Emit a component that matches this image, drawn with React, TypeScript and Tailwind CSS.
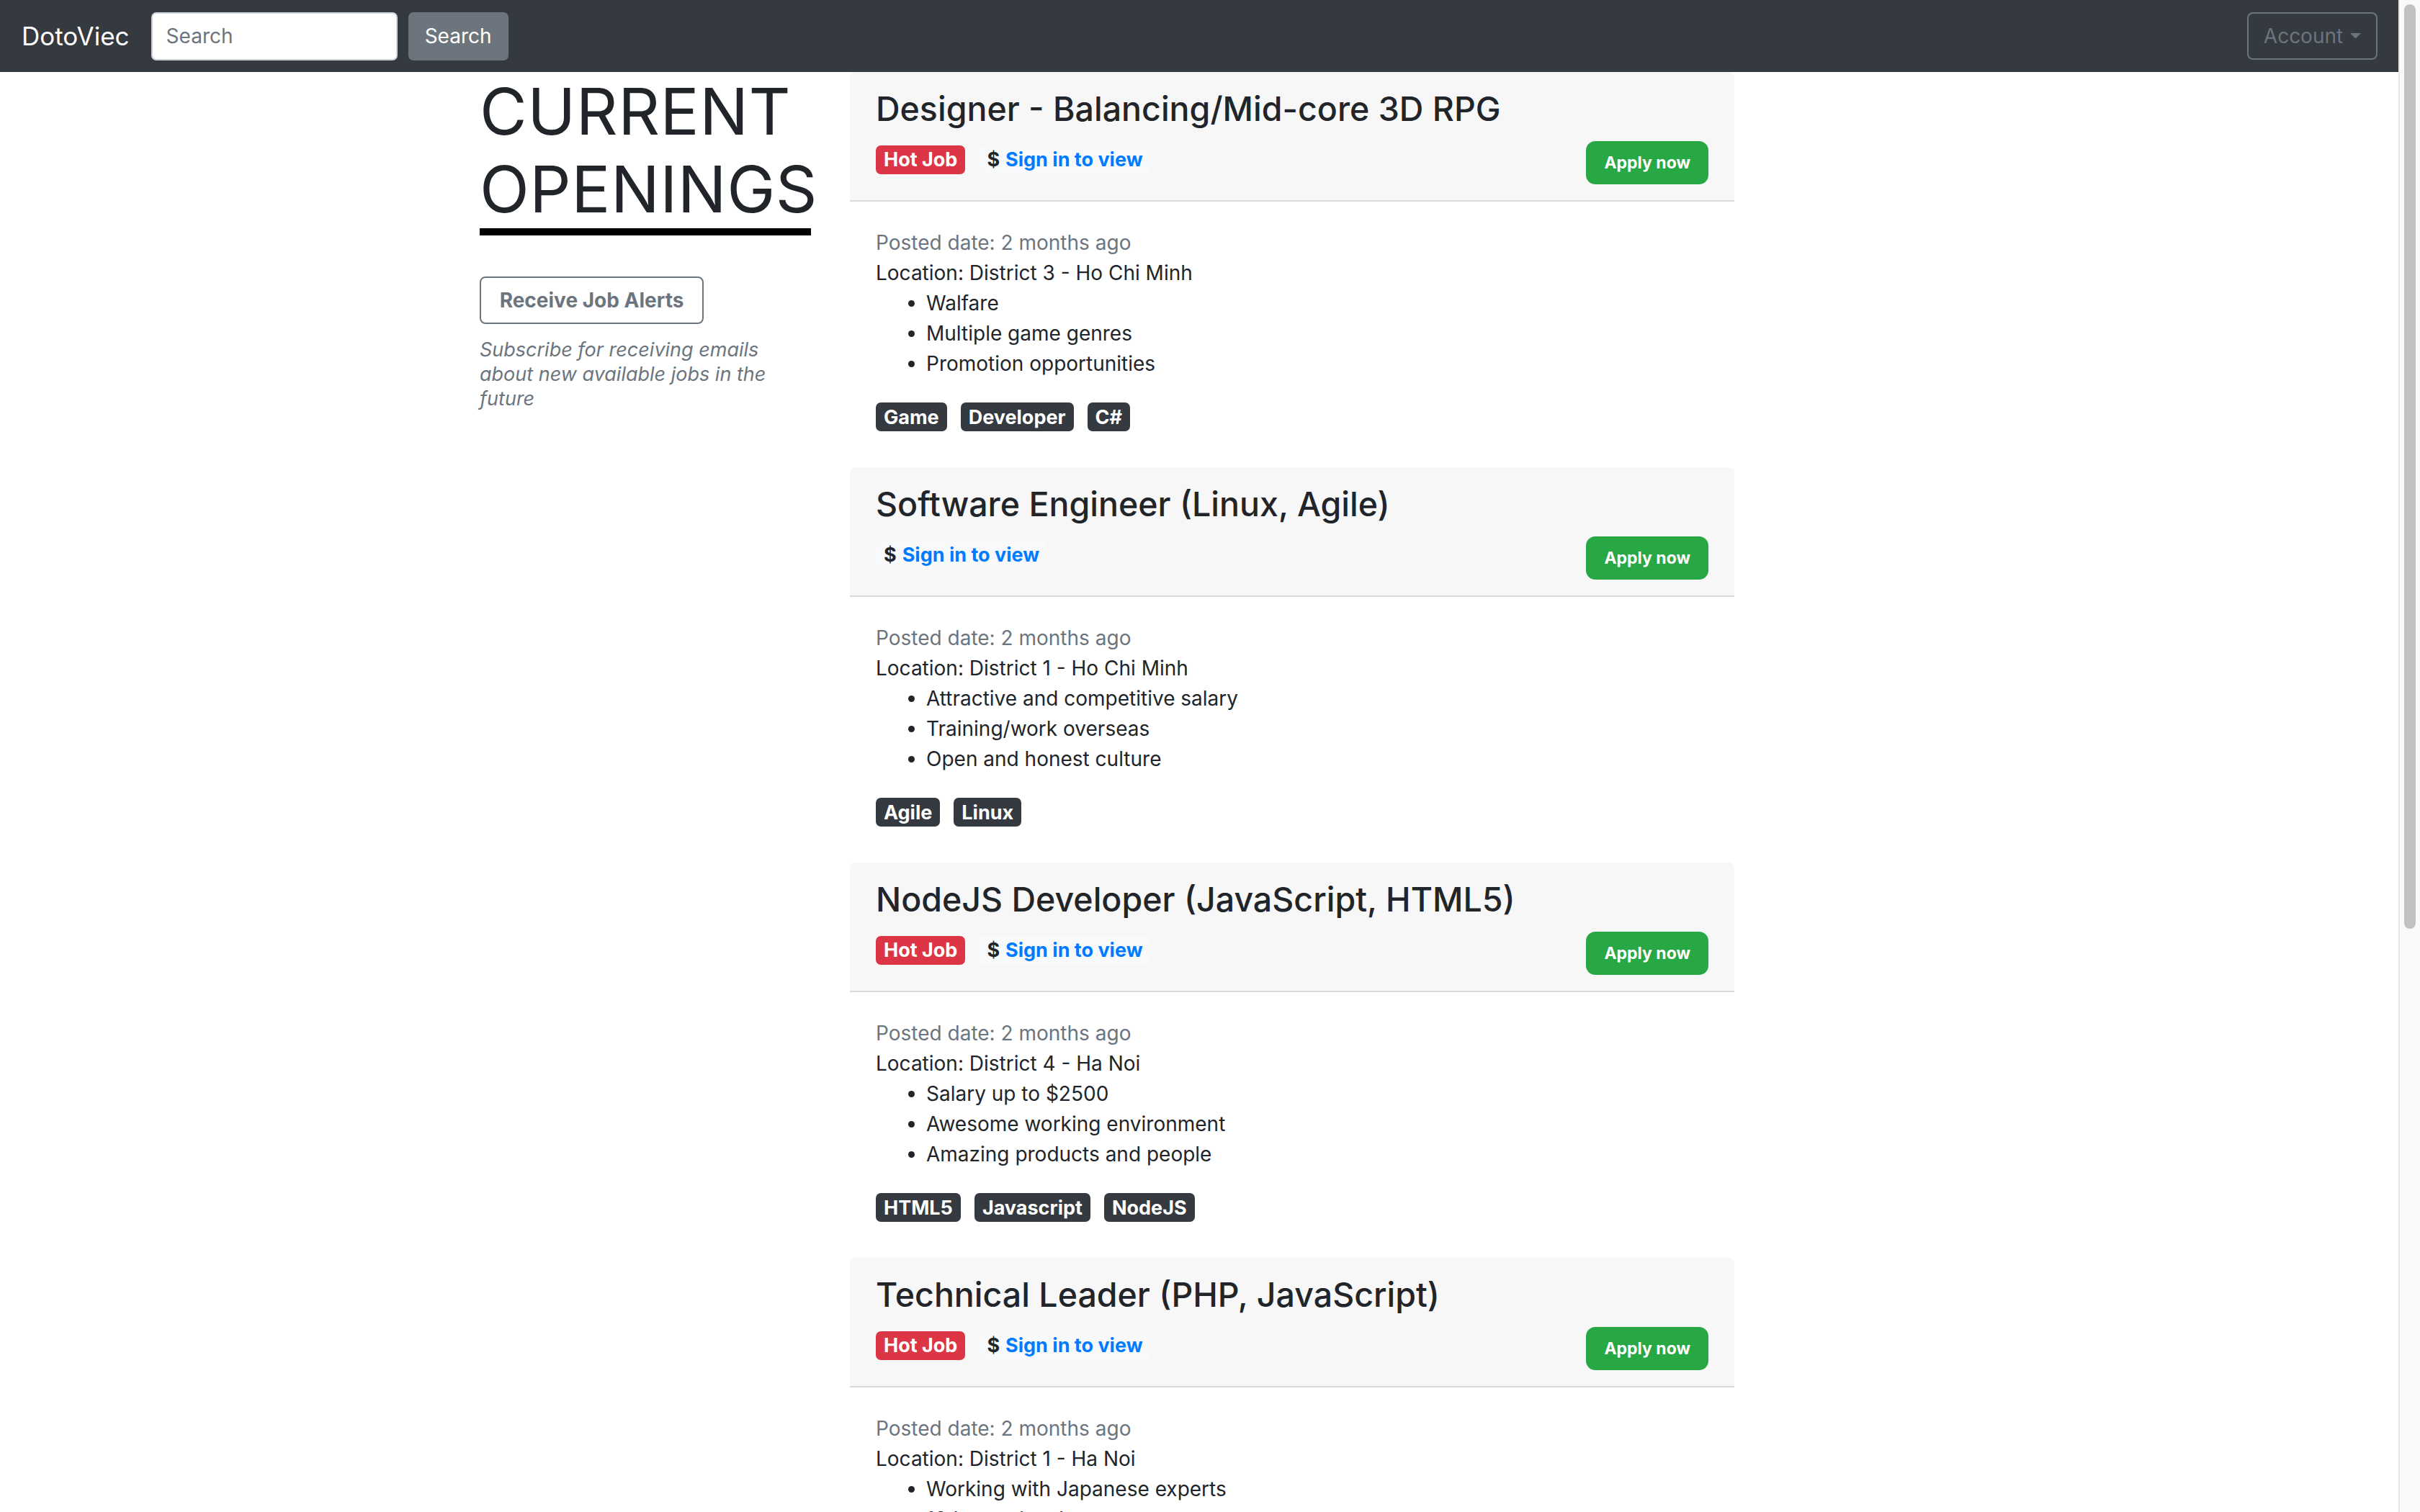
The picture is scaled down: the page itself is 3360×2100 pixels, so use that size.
import React from 'react';

type Job = {
  title: string;
  hot: boolean;
  location: string;
  perks: string[];
  tags: string[];
};

const jobs: Job[] = [
  {
    title: 'Designer - Balancing/Mid-core 3D RPG',
    hot: true,
    location: 'District 3 - Ho Chi Minh',
    perks: ['Walfare', 'Multiple game genres', 'Promotion opportunities'],
    tags: ['Game', 'Developer', 'C#'],
  },
  {
    title: 'Software Engineer (Linux, Agile)',
    hot: false,
    location: 'District 1 - Ho Chi Minh',
    perks: ['Attractive and competitive salary', 'Training/work overseas', 'Open and honest culture'],
    tags: ['Agile', 'Linux'],
  },
  {
    title: 'NodeJS Developer (JavaScript, HTML5)',
    hot: true,
    location: 'District 4 - Ha Noi',
    perks: ['Salary up to $2500', 'Awesome working environment', 'Amazing products and people'],
    tags: ['HTML5', 'Javascript', 'NodeJS'],
  },
  {
    title: 'Technical Leader (PHP, JavaScript)',
    hot: true,
    location: 'District 1 - Ha Noi',
    perks: ['Working with Japanese experts', '13th month salary', 'Flexible working time'],
    tags: ['PHP', 'Javascript', 'Leader'],
  },
];

export default function App() {
  return (
    <div className="flex h-[2100px] w-[3360px] overflow-hidden bg-white text-[#212529] [font-family:Inter,'Liberation_Sans',sans-serif]">
      <div className="flex h-full min-w-0 flex-1 flex-col overflow-hidden">
        <Navbar />

        {/* Page body */}
        <div className="mx-auto flex w-[1998px]">
          <aside className="w-[514px] shrink-0">
            <h1 className="mt-[1px] text-[90px] font-normal leading-[108px] tracking-[0.5px]">
              CURRENT
              <br />
              OPENINGS
            </h1>
            <div className="h-[10px] w-[460px] bg-black" />
            <button className="mt-[57px] flex h-[66px] w-[311px] items-center justify-center rounded-[8px] border-2 border-[#6c757d] text-[28px] font-bold text-[#6c757d]">
              Receive Job Alerts
            </button>
            <p className="mt-[19px] w-[450px] text-[27px] italic leading-[34px] text-[#6c757d]">
              Subscribe for receiving emails about new available jobs in the future
            </p>
          </aside>

          <main className="w-[1228px] shrink-0">
            {jobs.map((job) => (
              <JobCard key={job.title} job={job} />
            ))}
          </main>
        </div>
      </div>

      {/* Scrollbar */}
      <div className="flex h-full w-[30px] shrink-0 justify-center border-l-2 border-[#e8e8e8] bg-[#fafafa]">
        <div className="mt-[6px] h-[1284px] w-[16px] rounded-full bg-[#c1c1c1]" />
      </div>
    </div>
  );
}

function Navbar() {
  return (
    <nav className="flex h-[100px] shrink-0 items-center bg-[#343a40] pl-[30px] pr-[29px]">
      <span className="text-[35px] leading-none text-white">DotoViec</span>
      <input
        readOnly
        placeholder="Search"
        className="ml-[30px] h-[67px] w-[342px] rounded-[7px] border-2 border-[#ced4da] bg-white px-[19px] text-[28px] outline-none placeholder:text-[#6c757d]"
      />
      <button className="ml-[15px] h-[67px] w-[139px] rounded-[7px] bg-[#6c757d] text-[28px] text-white">
        Search
      </button>
      <button className="ml-auto flex h-[66px] w-[181px] items-center justify-center gap-[10px] rounded-[8px] border-2 border-[#6c757d] text-[28px] text-[#6c757d]">
        Account
        <svg width="15" height="8" viewBox="0 0 15 8">
          <polygon points="0,0 15,0 7.5,7.5" fill="#6c757d" />
        </svg>
      </button>
    </nav>
  );
}

function JobCard({ job }: { job: Job }) {
  return (
    <div className="mb-[15px] overflow-hidden rounded-[8px]">
      {/* Header */}
      <div className="border-b-2 border-[#dadada] bg-[#f7f7f7] px-[36px] pt-[24px] pb-[22px]">
        <h3 className="text-[46.5px] font-medium leading-[55px]">{job.title}</h3>
        <div className="mt-[17px] flex items-start justify-between">
          <div className="mt-[6px] flex gap-[19px]">
            {job.hot && (
              <span className="flex h-[40px] items-center rounded-[7px] bg-[#dc3545] px-[11px] text-[27px] font-bold text-white">
                Hot Job
              </span>
            )}
            <span className="flex h-[40px] items-center rounded-[7px] bg-[#f8f9fa] px-[11px] text-[27px] font-bold">
              <span className="text-[#212529]">$</span>
              <span className="ml-[8px] text-[#007bff]">Sign in to view</span>
            </span>
          </div>
          <button className="h-[60px] rounded-[13px] bg-[#28a745] px-[25px] text-[23px] font-bold text-white">
            Apply now
          </button>
        </div>
      </div>

      {/* Body */}
      <div className="px-[36px] pt-[36px] pb-[35px] text-[28px] leading-[42px]">
        <p className="text-[#6c757d]">Posted date: 2 months ago</p>
        <p>Location: {job.location}</p>
        <ul className="list-disc pl-[70px]">
          {job.perks.map((perk) => (
            <li key={perk}>{perk}</li>
          ))}
        </ul>
        <div className="mt-[33px] flex gap-[19px]">
          {job.tags.map((tag) => (
            <span
              key={tag}
              className="flex h-[40px] items-center rounded-[7px] bg-[#343a40] px-[11px] text-[27px] font-bold leading-none text-white"
            >
              {tag}
            </span>
          ))}
        </div>
      </div>
    </div>
  );
}
